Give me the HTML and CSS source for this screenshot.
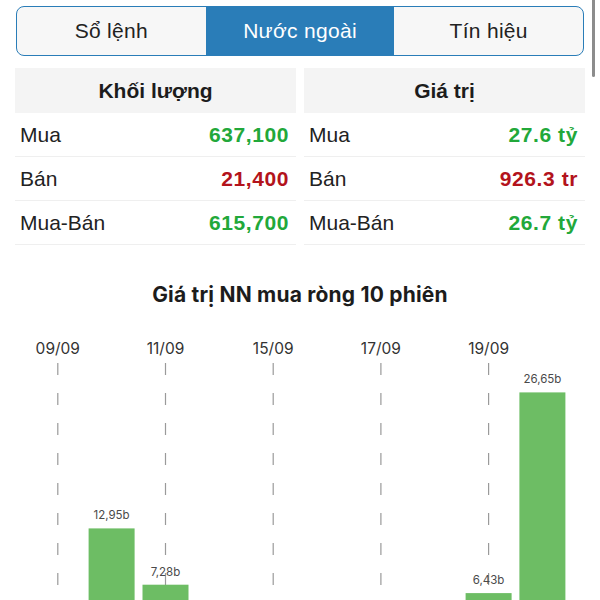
FILE: index.html
```html
<!DOCTYPE html>
<html lang="vi">
<head>
    <meta charset="UTF-8">
    <meta name="viewport" content="width=device-width, initial-scale=1.0">
    <title>Nước ngoài</title>
    <link rel="stylesheet" href="styles.css">
</head>
<body>

    <!-- Tabs -->
    <div class="tabs">
        <div class="tab">Sổ lệnh</div>
        <div class="tab active">Nước ngoài</div>
        <div class="tab">Tín hiệu</div>
    </div>

    <!-- Foreign trading summary -->
    <div class="stats">
        <div class="stat-col">
            <div class="stat-head">Khối lượng</div>
            <div class="stat-row"><span>Mua</span><span class="val up">637,100</span></div>
            <div class="stat-row"><span>Bán</span><span class="val down">21,400</span></div>
            <div class="stat-row"><span>Mua-Bán</span><span class="val up">615,700</span></div>
        </div>
        <div class="stat-col">
            <div class="stat-head">Giá trị</div>
            <div class="stat-row"><span>Mua</span><span class="val up">27.6 tỷ</span></div>
            <div class="stat-row"><span>Bán</span><span class="val down">926.3 tr</span></div>
            <div class="stat-row"><span>Mua-Bán</span><span class="val up">26.7 tỷ</span></div>
        </div>
    </div>

    <!-- Net buy chart -->
    <div class="chart">
        <h2 class="chart-title">Giá trị NN mua ròng 10 phiên</h2>
        <svg class="chart-svg" width="600" height="280" viewBox="0 320 600 280">
            <g class="grid">
                <line x1="57.8" y1="363" x2="57.8" y2="660"/>
                <line x1="165.5" y1="363" x2="165.5" y2="660"/>
                <line x1="273.2" y1="363" x2="273.2" y2="660"/>
                <line x1="380.9" y1="363" x2="380.9" y2="660"/>
                <line x1="488.6" y1="363" x2="488.6" y2="660"/>
            </g>
            <g class="dates">
                <text x="57.8" y="354">09/09</text>
                <text x="165.5" y="354">11/09</text>
                <text x="273.2" y="354">15/09</text>
                <text x="380.9" y="354">17/09</text>
                <text x="488.6" y="354">19/09</text>
            </g>
            <g class="bars">
                <rect x="88.6" y="528.4" width="46" height="129"/>
                <rect x="142.5" y="584.7" width="46" height="73"/>
                <rect x="465.6" y="593.1" width="46" height="64"/>
                <rect x="519.4" y="392.4" width="46" height="265"/>
            </g>
            <g class="values">
                <text x="111.6" y="519.4">12,95b</text>
                <text x="165.5" y="575.7">7,28b</text>
                <text x="488.6" y="584.1">6,43b</text>
                <text x="542.4" y="383.4">26,65b</text>
            </g>
        </svg>
    </div>

    <div class="scroll-thumb"></div>

</body>
</html>
```

FILE: styles.css
```css
/* Global Styles */
html, body {
    overflow: hidden;
}

body {
    font-family: "Liberation Sans", Arial, sans-serif;
    margin: 0;
    padding: 6px 0 0;
    background-color: #fff;
    color: #222;
}

/* Tabs */
.tabs {
    display: flex;
    height: 50px;
    margin: 0 16px;
    border: 1.5px solid #2a7db8;
    border-radius: 8px;
    overflow: hidden;
    box-sizing: border-box;
    background-color: #f7f7f7;
}

.tab {
    flex: 1;
    display: flex;
    align-items: center;
    justify-content: center;
    font-size: 21px;
    letter-spacing: 0.3px;
    color: #222;
}

.tab.active {
    background-color: #2a7db8;
    color: #fff;
}

/* Summary */
.stats {
    display: grid;
    grid-template-columns: 1fr 1fr;
    gap: 8px;
    margin: 12px 15px 0;
}

.stat-head {
    height: 45px;
    display: flex;
    align-items: center;
    justify-content: center;
    background-color: #f4f4f4;
    font-size: 21px;
    font-weight: bold;
    color: #1c1c1c;
}

.stat-row {
    height: 43px;
    display: flex;
    align-items: center;
    justify-content: space-between;
    padding: 0 7px 0 5px;
    border-bottom: 1px solid #efefef;
    font-size: 21px;
}

.val {
    font-weight: bold;
    letter-spacing: 0.6px;
}

.up {
    color: #22a83a;
}

.down {
    color: #b3131c;
}

/* Chart */
.chart-title {
    margin: 38px 0 13px;
    font-family: Inter, "Liberation Sans", sans-serif;
    font-size: 21px;
    line-height: 24px;
    font-weight: bold;
    letter-spacing: 0.2px;
    text-align: center;
    color: #1c1c1c;
}

.chart-svg {
    display: block;
    font-family: Inter, "Liberation Sans", sans-serif;
}

.grid line {
    stroke: #9a9a9a;
    stroke-width: 1.2;
    stroke-dasharray: 12 18;
}

.dates text {
    font-size: 15.5px;
    fill: #333;
    text-anchor: middle;
}

.bars rect {
    fill: #6dbd64;
}

.values text {
    font-size: 11.5px;
    fill: #4a4a4a;
    text-anchor: middle;
}

/* Scroll indicator */
.scroll-thumb {
    position: fixed;
    top: -3px;
    right: 5px;
    width: 3px;
    height: 80px;
    border-radius: 2px;
    background-color: #8c8c8c;
}
```
